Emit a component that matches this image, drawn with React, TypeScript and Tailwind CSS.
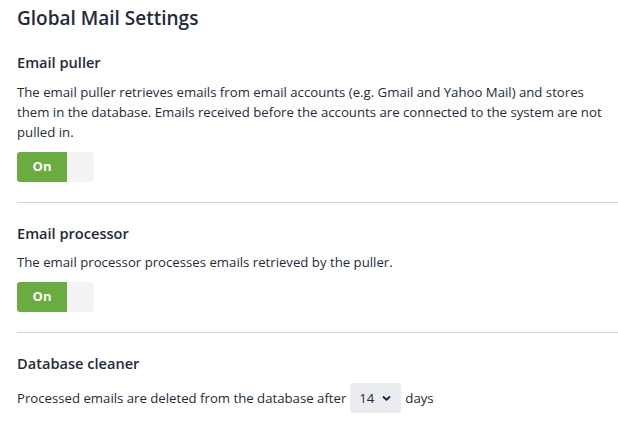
const SECTION_TEXT = {
  puller:
    'The email puller retrieves emails from email accounts (e.g. Gmail and Yahoo Mail) and stores them in the database. Emails received before the accounts are connected to the system are not pulled in.',
  processor: 'The email processor processes emails retrieved by the puller.',
};

function Toggle() {
  return (
    <div className="flex h-[30px] w-[77px] overflow-hidden rounded-[3px]">
      <span className="flex w-[50px] items-center justify-center bg-[#6aab42] text-[13px] font-bold text-white">
        On
      </span>
      <span className="flex-1 bg-[#f3f3f3]" />
    </div>
  );
}

function Chevron() {
  return (
    <svg width="11" height="10" viewBox="0 0 11 10" className="text-[#1f2b4a]">
      <path d="M2.5 4 L5.5 6.8 L8.5 4" fill="none" stroke="currentColor" strokeWidth="2" strokeLinecap="round" strokeLinejoin="round" />
    </svg>
  );
}

export default function App() {
  return (
    <div
      className="min-h-screen bg-white pl-[17px] text-[#1f2a3c]"
      style={{ fontFamily: '"Open Sans", "Noto Sans", sans-serif' }}
    >
      <h1 className="pt-[4px] text-[19px] leading-[28px] font-semibold">Global Mail Settings</h1>

      {/* Email puller */}
      <section className="pt-[20px] pb-[20px]">
        <h2 className="text-[14.6px] leading-[20px] font-semibold">Email puller</h2>
        <p className="mt-[9.5px] text-[13.2px] leading-[20px]">{SECTION_TEXT.puller}</p>
        <div className="mt-[10px]">
          <Toggle />
        </div>
      </section>
      <div className="h-px bg-[#d4d4d4]" />

      {/* Email processor */}
      <section className="pt-[20px] pb-[20px]">
        <h2 className="text-[14.6px] leading-[20px] font-semibold">Email processor</h2>
        <p className="mt-[9.5px] text-[13.2px] leading-[20px]">{SECTION_TEXT.processor}</p>
        <div className="mt-[10px]">
          <Toggle />
        </div>
      </section>
      <div className="h-px bg-[#d4d4d4]" />

      {/* Database cleaner */}
      <section className="pt-[20px]">
        <h2 className="text-[14.6px] leading-[20px] font-semibold">Database cleaner</h2>
        <div className="mt-[10px] flex items-center gap-[4px] text-[13.2px] leading-[20px]">
          <span>Processed emails are deleted from the database after</span>
          <span className="flex h-[30px] w-[51px] items-center justify-center gap-[7px] rounded-[3px] bg-[#eaecf0]">
            14
            <Chevron />
          </span>
          <span>days</span>
        </div>
      </section>
    </div>
  );
}
